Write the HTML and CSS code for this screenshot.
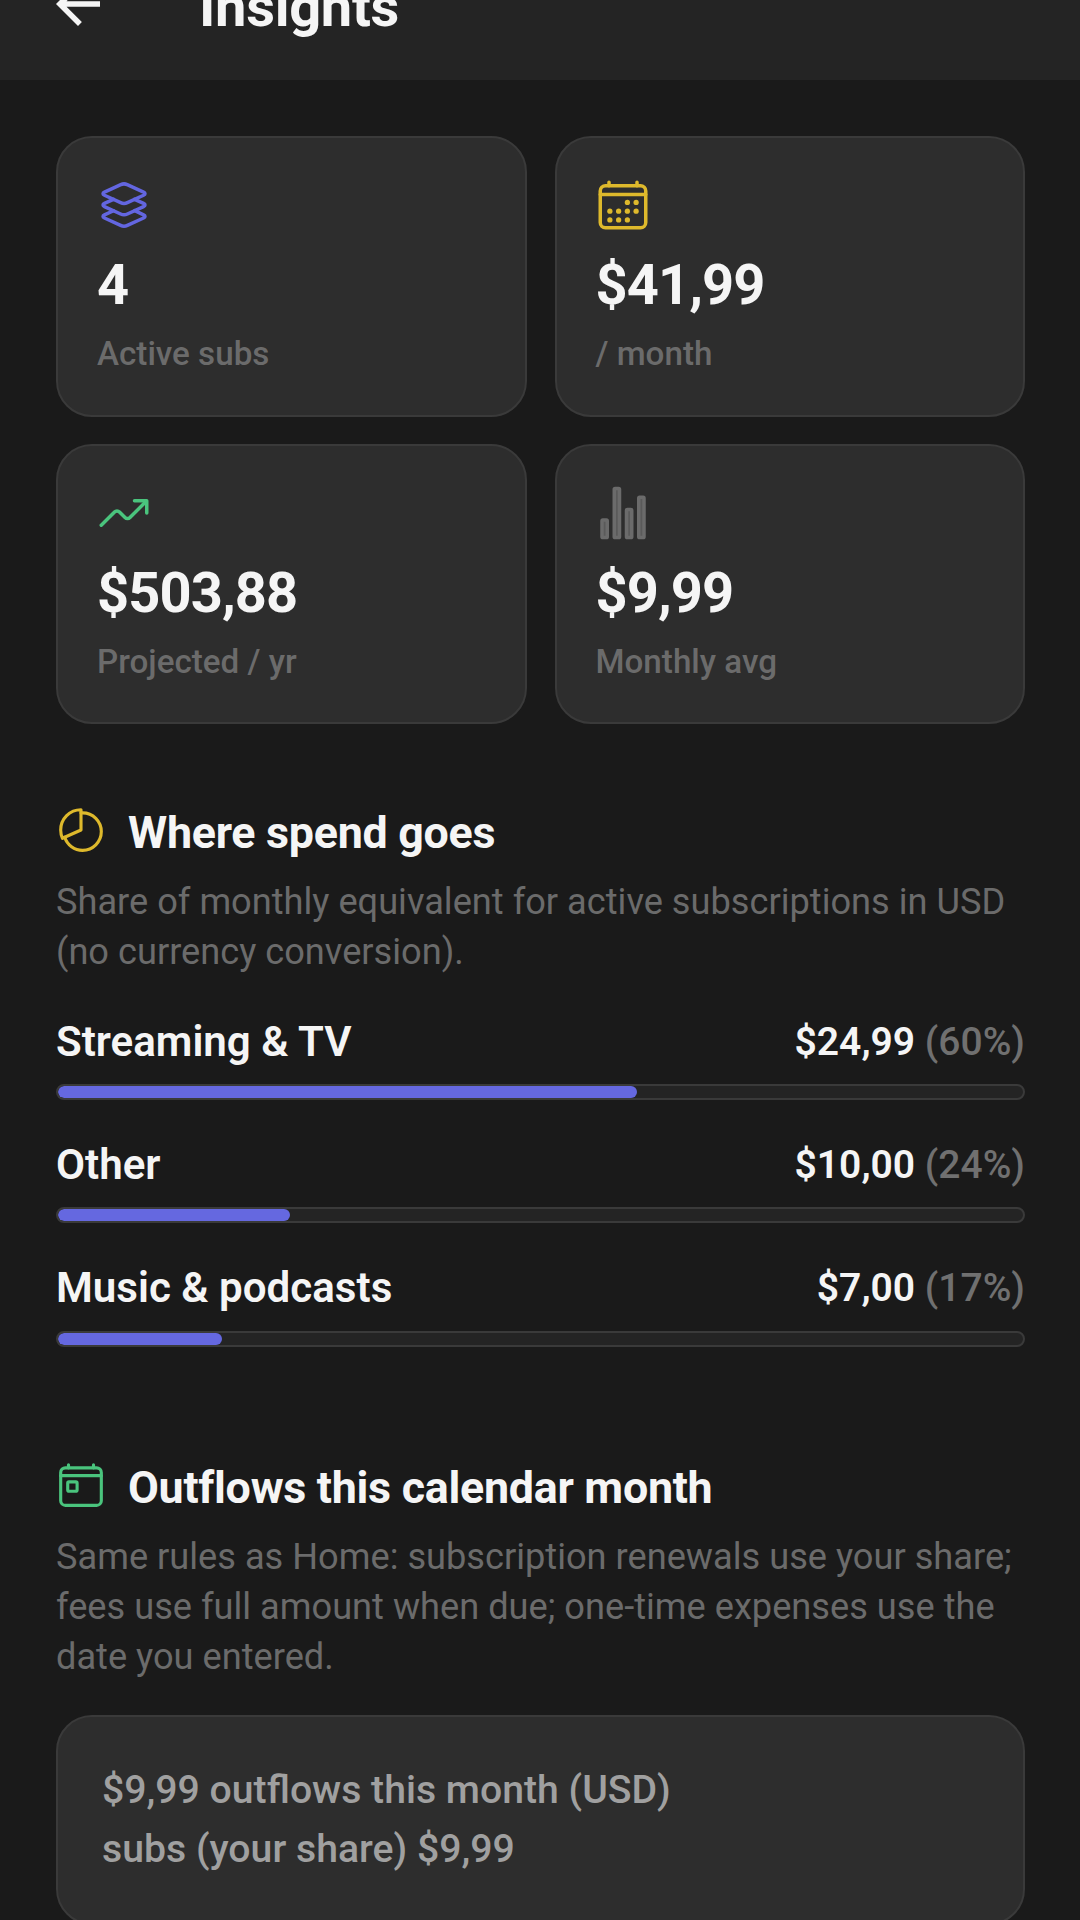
FILE: index.html
```html
<!DOCTYPE html>
<html lang="en">
<head>
  <meta charset="UTF-8">
  <meta name="viewport" content="width=device-width, initial-scale=1.0">
  <title>Insights</title>
  <link rel="stylesheet" href="styles.css">
</head>
<body>
  <header class="app-bar">
    <svg class="back" viewBox="0 0 24 24"><path d="M20 11H7.83l5.59-5.59L12 4l-8 8 8 8 1.41-1.41L7.83 13H20v-2z"/></svg>
    <h1>Insights</h1>
  </header>

  <main>
    <div class="stats">
      <div class="card stat">
        <svg class="icon purple" viewBox="0 0 512 512">
          <path d="M434.8 137.65l-149.36-68.1c-16.19-7.4-42.69-7.4-58.88 0L77.3 137.65c-17.6 8-17.6 21.09 0 29.09l148 67.5c16.89 7.7 44.69 7.7 61.58 0l148-67.5c17.52-8 17.52-21.1-.08-29.09z"/>
          <path d="M160 308.52l-82.7 37.11c-17.6 8-17.6 21.1 0 29.1l148 67.5c16.89 7.69 44.69 7.69 61.58 0l148-67.5c17.6-8 17.6-21.1 0-29.1l-79.94-38.47"/>
          <path d="M160 204.48l-82.8 37.16c-17.6 8-17.6 21.1 0 29.1l148 67.49c16.89 7.7 44.69 7.7 61.58 0l148-67.49c17.7-8 17.7-21.1.1-29.1L352 204.48"/>
        </svg>
        <div class="value">4</div>
        <div class="label">Active subs</div>
      </div>
      <div class="card stat">
        <svg class="icon yellow" viewBox="0 0 512 512">
          <rect x="48" y="80" width="416" height="384" rx="48"/>
          <path d="M128 48v32M384 48v32M464 160H48"/>
          <g class="dots">
            <circle cx="296" cy="232" r="24"/><circle cx="376" cy="232" r="24"/>
            <circle cx="136" cy="312" r="24"/><circle cx="216" cy="312" r="24"/>
            <circle cx="296" cy="312" r="24"/><circle cx="376" cy="312" r="24"/>
            <circle cx="136" cy="392" r="24"/><circle cx="216" cy="392" r="24"/>
            <circle cx="296" cy="392" r="24"/>
          </g>
        </svg>
        <div class="value">$41,99</div>
        <div class="label">/ month</div>
      </div>
      <div class="card stat">
        <svg class="icon green" viewBox="0 0 512 512">
          <path d="M352 144h112v112"/>
          <path d="M48 368l121.37-121.37a32 32 0 0 1 45.26 0l50.74 50.74a32 32 0 0 0 45.26 0L448 160"/>
        </svg>
        <div class="value">$503,88</div>
        <div class="label">Projected / yr</div>
      </div>
      <div class="card stat">
        <svg class="icon gray" viewBox="0 0 512 512">
          <rect x="64" y="320" width="48" height="160" rx="8"/>
          <rect x="176" y="32" width="48" height="448" rx="8"/>
          <rect x="288" y="224" width="48" height="256" rx="8"/>
          <rect x="400" y="112" width="48" height="368" rx="8"/>
        </svg>
        <div class="value">$9,99</div>
        <div class="label">Monthly avg</div>
      </div>
    </div>

    <section class="spend">
      <div class="section-title">
        <svg class="icon yellow" viewBox="0 0 512 512">
          <path d="M256.05 80.65Q263.94 80 272 80c106 0 192 86 192 192s-86 192-192 192A192.09 192.09 0 0 1 89.12 330.65"/>
          <path d="M256 48C141.12 48 48 141.12 48 256a207.29 207.29 0 0 0 18.09 85L256 256z"/>
        </svg>
        <h2>Where spend goes</h2>
      </div>
      <p class="hint">Share of monthly equivalent for active subscriptions in USD<br>(no currency conversion).</p>

      <div class="categories">
        <div class="category">
          <div class="row"><span>Streaming &amp; TV</span><span class="amount">$24,99 <small>(60%)</small></span></div>
          <div class="bar"><div class="fill" style="width: 60%"></div></div>
        </div>
        <div class="category">
          <div class="row"><span>Other</span><span class="amount">$10,00 <small>(24%)</small></span></div>
          <div class="bar"><div class="fill" style="width: 24%"></div></div>
        </div>
        <div class="category">
          <div class="row"><span>Music &amp; podcasts</span><span class="amount">$7,00 <small>(17%)</small></span></div>
          <div class="bar"><div class="fill" style="width: 17%"></div></div>
        </div>
      </div>
    </section>

    <section class="outflows">
      <div class="section-title">
        <svg class="icon green" viewBox="0 0 512 512">
          <rect x="48" y="80" width="416" height="384" rx="48"/>
          <rect x="120" y="224" width="96" height="96" rx="13"/>
          <path d="M128 48v32M384 48v32M464 160H48"/>
        </svg>
        <h2>Outflows this calendar month</h2>
      </div>
      <p class="hint">Same rules as Home: subscription renewals use your share;<br>fees use full amount when due; one-time expenses use the<br>date you entered.</p>
      <div class="card summary">
        $9,99 outflows this month (USD)<br>
        subs (your share) $9,99
      </div>
    </section>
  </main>
</body>
</html>
```

FILE: styles.css
```css
* {
  box-sizing: border-box;
}

html,
body {
  height: 1920px;
  overflow: hidden;
}

body {
  margin: 0;
  background: #1a1a1a;
  color: #f5f5f5;
  font-family: Roboto, sans-serif;
}

h1, h2, p {
  margin: 0;
}

/* header is scrolled partly out of view */
.app-bar {
  display: flex;
  align-items: center;
  height: 153px;
  margin-top: -73px;
  padding-left: 45px;
  background: #242424;
}

.back {
  width: 66px;
  height: 66px;
  fill: #f5f5f5;
}

.app-bar h1 {
  margin-left: 88px;
  padding-top: 6px;
  font-size: 56px;
  font-weight: 700;
  line-height: 60px;
  letter-spacing: -0.3px;
}

main {
  padding: 56px 55px 0 56px;
}

.card {
  background: #2d2d2d;
  border: 2px solid #3a3a3a;
  border-radius: 36px;
}

.stats {
  display: grid;
  grid-template-columns: 1fr 1fr;
  gap: 27px 28px;
}

.stat {
  height: 280.5px;
  padding: 39px;
}

.icon {
  display: block;
  width: 56px;
  height: 56px;
  fill: none;
  stroke: currentColor;
  stroke-width: 32;
  stroke-linecap: round;
  stroke-linejoin: round;
}

.stat .icon {
  margin-left: -1px;
}

.dots {
  fill: currentColor;
  stroke: none;
}

.purple { color: #6366e0; }
.yellow { color: #deb92c; }
.green { color: #4ac47d; }
.gray { color: #6b6b6b; }

.gray rect {
  fill: #5a5a5a;
}

.value {
  margin-top: 19px;
  font-size: 56px;
  font-weight: 700;
  line-height: 66px;
  letter-spacing: -0.9px;
}

.label {
  margin-top: 16px;
  color: #6b6b6b;
  font-size: 33.2px;
  font-weight: 500;
  line-height: 40px;
}

.spend {
  margin-top: 81px;
}

.outflows {
  margin-top: 113px;
}

.section-title {
  display: flex;
  gap: 22px;
}

.section-title .icon {
  width: 50px;
  height: 50px;
}

.section-title h2 {
  font-size: 44.8px;
  font-weight: 700;
  line-height: 56px;
  letter-spacing: -0.28px;
}

.hint {
  margin-top: 16px;
  color: #6b6b6b;
  font-size: 36.2px;
  line-height: 50.3px;
  white-space: nowrap;
}

.categories {
  display: flex;
  flex-direction: column;
  gap: 42px;
  margin-top: 41px;
}

.row {
  display: flex;
  justify-content: space-between;
  font-size: 42.1px;
  font-weight: 600;
  line-height: 46px;
}

.amount {
  font-size: 39px;
}

.row small {
  color: #707070;
  font-size: inherit;
  font-weight: 500;
}

.bar {
  height: 16px;
  margin-top: 19.4px;
  background: #242424;
  border: 2px solid #3a3a3a;
  border-radius: 8px;
  overflow: hidden;
}

.fill {
  height: 100%;
  background: #6568e0;
  border-radius: 6px;
}

.summary {
  margin-top: 32.5px;
  padding: 44px 44px 45px;
  color: #a0a0a0;
  font-size: 39.2px;
  font-weight: 500;
  line-height: 58.5px;
}
```
